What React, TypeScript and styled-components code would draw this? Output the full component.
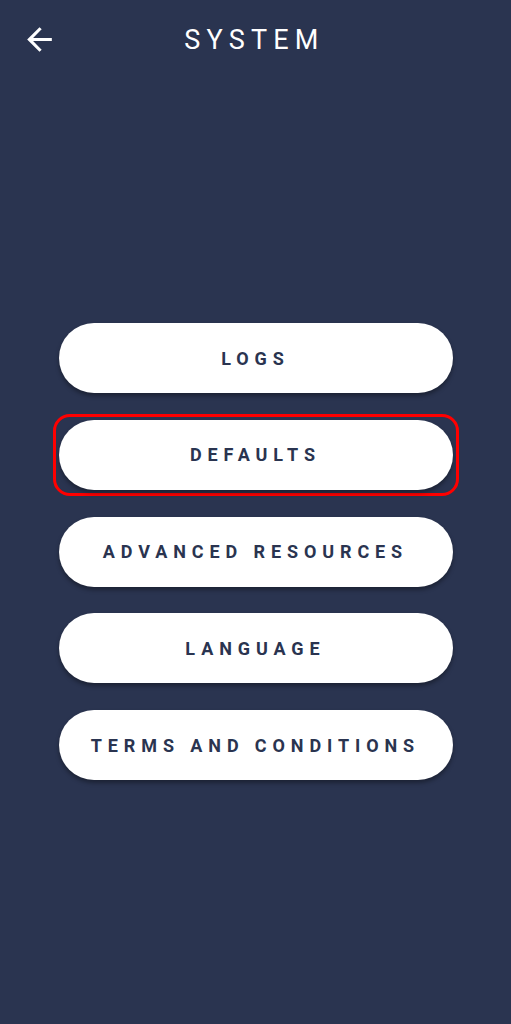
import React from "react";
import styled, { createGlobalStyle } from "styled-components";

const Global = createGlobalStyle`
  html, body { margin: 0; padding: 0; background: #2a3450; }
  body { font-family: Roboto, "Liberation Sans", sans-serif; }
  * { box-sizing: border-box; }
`;

const Screen = styled.div`
  width: 511px;
  height: 1024px;
  background: #2a3450;
  display: flex;
  flex-direction: column;
`;

const Header = styled.header`
  position: relative;
  height: 80px;
  display: flex;
  align-items: center;
  justify-content: center;
`;

const BackButton = styled.button`
  position: absolute;
  left: 21px;
  top: 21px;
  width: 37px;
  height: 37px;
  padding: 0;
  border: none;
  background: transparent;
  color: #ffffff;
  display: flex;
`;

const Title = styled.h1`
  margin: 0;
  font-family: Roboto, "Liberation Sans", sans-serif;
  font-weight: 400;
  font-size: 27px;
  letter-spacing: 6.2px;
  color: #ffffff;
  padding-left: 0;
  margin-right: 2px;
  line-height: 1;
`;

const Menu = styled.nav`
  display: flex;
  flex-direction: column;
  align-items: center;
  gap: 26.75px;
  padding-top: 243px;
`;

const Highlight = styled.div<{ $active?: boolean }>`
  padding: 3px;
  margin: -6px;
  border-radius: 17px;
  border: 3px solid ${(p) => (p.$active ? "#ff0000" : "transparent")};
`;

const MenuButton = styled.button`
  width: 394px;
  height: 70px;
  border: none;
  border-radius: 35px;
  background: #ffffff;
  box-shadow: 0 3px 4px rgba(0, 0, 0, 0.35);
  font-family: Roboto, "Liberation Sans", sans-serif;
  font-weight: 700;
  font-size: 18px;
  letter-spacing: 5.9px;
  padding-left: 5.9px;
  color: #2a3450;
  display: flex;
  align-items: center;
  justify-content: center;
  cursor: pointer;
`;

const items = ["LOGS", "DEFAULTS", "ADVANCED RESOURCES", "LANGUAGE", "TERMS AND CONDITIONS"];

export default function App() {
  return (
    <Screen>
      <Global />
      <Header>
        <BackButton aria-label="Back">
          <svg width="37" height="37" viewBox="0 0 24 24" fill="currentColor">
            <path d="M20 11H7.83l5.59-5.59L12 4l-8 8 8 8 1.41-1.41L7.83 13H20v-2z" />
          </svg>
        </BackButton>
        <Title>SYSTEM</Title>
      </Header>
      <Menu>
        {items.map((label) =>
          label === "DEFAULTS" ? (
            <Highlight key={label} $active>
              <MenuButton>{label}</MenuButton>
            </Highlight>
          ) : (
            <MenuButton key={label}>{label}</MenuButton>
          )
        )}
      </Menu>
    </Screen>
  );
}
